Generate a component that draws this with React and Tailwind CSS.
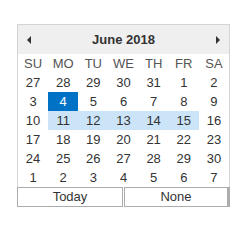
const days = ['SU', 'MO', 'TU', 'WE', 'TH', 'FR', 'SA'];

const weeks = [
  [27, 28, 29, 30, 31, 1, 2],
  [3, 4, 5, 6, 7, 8, 9],
  [10, 11, 12, 13, 14, 15, 16],
  [17, 18, 19, 20, 21, 22, 23],
  [24, 25, 26, 27, 28, 29, 30],
  [1, 2, 3, 4, 5, 6, 7],
];

function Cell({ value, selected, inWeek }) {
  let cls = 'text-[#333]';
  if (selected) cls = 'bg-[#0072c6] text-white';
  else if (inWeek) cls = 'bg-[#cce4f7] text-[#333]';
  return (
    <div className={`h-[19px] flex items-center justify-center ${cls}`}>{value}</div>
  );
}

export default function App() {
  return (
    <div className="pl-[17px] pt-[24px] bg-white w-[247px] h-[235px]" style={{ fontFamily: '"Liberation Sans", Arial, sans-serif' }}>
      <div className="w-[213px]">
        <div className="border-x border-t border-[#d4d4d4] bg-white">
          <div className="h-[29px] bg-[#efefef] flex items-center justify-between px-[9px]">
            <svg width="4" height="8" viewBox="0 0 4 8"><path d="M4 0 L0 4 L4 8 Z" fill="#333" /></svg>
            <span className="text-[13px] font-bold text-[#333]">June 2018</span>
            <svg width="4" height="8" viewBox="0 0 4 8"><path d="M0 0 L4 4 L0 8 Z" fill="#333" /></svg>
          </div>
          <div className="grid grid-cols-7 text-[13px] text-[#555]">
            {days.map((d) => (
              <div key={d} className="h-[19px] flex items-center justify-center">{d}</div>
            ))}
          </div>
          {weeks.map((w, r) => (
            <div key={r} className="grid grid-cols-7 text-[13px]">
              {w.map((v, c) => (
                <Cell
                  key={c}
                  value={v}
                  selected={r === 1 && c === 1}
                  inWeek={r === 2 && c >= 1 && c <= 5}
                />
              ))}
            </div>
          ))}
        </div>
        <div className="flex gap-[1px] text-[13px] text-[#333]">
          <button className="w-[106px] h-[20px] border border-[#acacac] bg-white flex items-center justify-center">Today</button>
          <button className="w-[106px] h-[20px] border border-[#acacac] border-r-[3px] bg-white flex items-center justify-center">None</button>
        </div>
      </div>
    </div>
  );
}
